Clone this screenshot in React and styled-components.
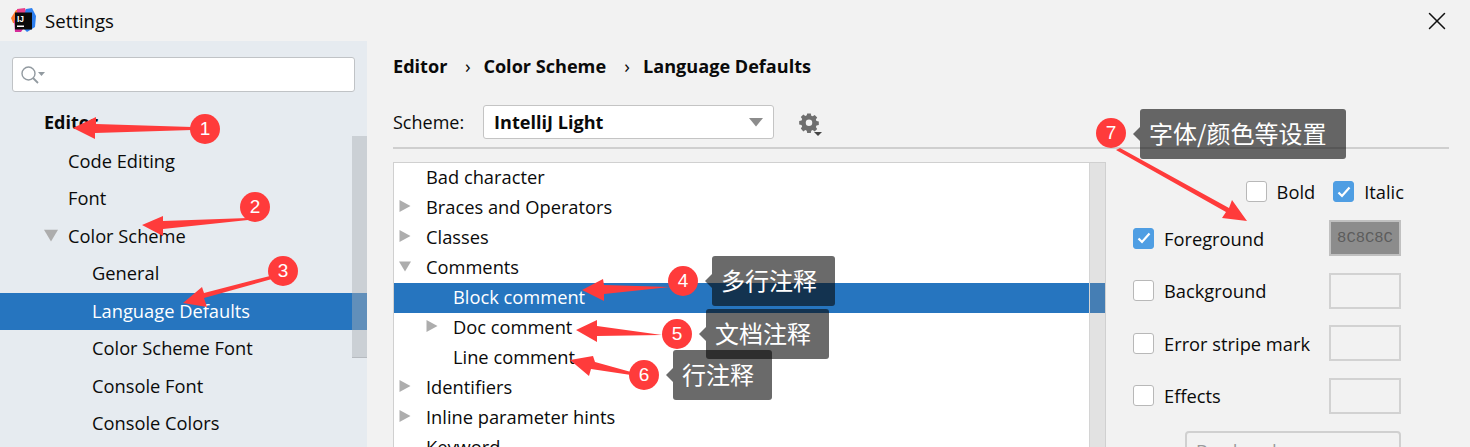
import React from "react";
import styled, { createGlobalStyle } from "styled-components";
import { X } from "lucide-react";

const GlobalStyle = createGlobalStyle`
  html, body {
    margin: 0;
    padding: 0;
    background: #f2f2f2;
  }
  body {
    font-family: "Open Sans", "Noto Sans", "Noto Sans CJK SC", sans-serif;
    font-size: 18.3px;
    color: #0a0a0a;
  }
`;

const Page = styled.div`
  position: relative;
  width: 1470px;
  height: 447px;
  overflow: hidden;
  background: #f2f2f2;
`;

const TitleBar = styled.div`
  height: 41px;
  display: flex;
  align-items: center;
  padding: 0 18px 0 11px;
  gap: 9px;
`;

const Title = styled.span`
  flex: 1;
  font-size: 18.6px;
`;

const Body = styled.div`
  display: flex;
  height: 406px;
`;

const Sidebar = styled.aside`
  position: relative;
  width: 367px;
  flex: none;
  background: #e6ebf0;
  padding: 16px 0 0;
  box-sizing: border-box;
  overflow: hidden;
`;

const Search = styled.div`
  margin: 0 12px;
  width: 343px;
  height: 35px;
  box-sizing: border-box;
  background: #fff;
  border: 1px solid #c0c3c6;
  border-radius: 3px;
  display: flex;
  align-items: center;
  padding-left: 7px;
`;

const NavList = styled.div`
  margin-top: 11px;
`;

const NavRow = styled.div`
  height: ${(p) => (p.$bold ? 39.5 : 37.5)}px;
  box-sizing: border-box;
  display: flex;
  align-items: center;
  padding-left: ${(p) => p.$indent}px;
  padding-bottom: 2px;
  font-weight: ${(p) => (p.$bold ? 700 : 400)};
  font-size: ${(p) => (p.$bold ? 18 : 18.3)}px;
  background: ${(p) => (p.$selected ? "#2675bf" : "transparent")};
  color: ${(p) => (p.$selected ? "#fff" : "inherit")};
`;

const Scroll = styled.div`
  position: absolute;
  right: 0;
  top: 95px;
  width: 15px;
  height: 222px;
  box-sizing: border-box;
  background: rgba(170, 175, 180, 0.45);
  border-bottom: 1px solid #b6babf;
`;

const Main = styled.main`
  flex: 1;
  padding: 0 21px 0 26px;
  min-width: 0;
`;

const Crumbs = styled.div`
  height: 51px;
  display: flex;
  align-items: center;
  font-size: 18.1px;
  font-weight: 700;
  box-sizing: border-box;
  padding-bottom: 2px;
`;

const Sep = styled.span`
  width: ${(p) => p.$w}px;
  box-sizing: border-box;
  padding-left: 5px;
  text-align: center;
  font-weight: 400;
  font-size: 19px;
`;

const SchemeRow = styled.div`
  margin-top: 13px;
  height: 42px;
  display: flex;
  align-items: flex-start;
  border-bottom: 2px solid #cfcfcf;
`;

const SchemeLabel = styled.span`
  width: 90px;
  height: 34px;
  line-height: 34px;
  font-size: 18px;
`;

const Combo = styled.div`
  width: 291px;
  height: 34px;
  box-sizing: border-box;
  background: #fff;
  border: 1px solid #c4c4c4;
  border-radius: 3px;
  display: flex;
  align-items: center;
  justify-content: space-between;
  padding: 0 10px;
  font-size: 18.1px;
  font-weight: 700;
`;

const GearWrap = styled.div`
  margin: 7px 0 0 24px;
  width: 24px;
  height: 24px;
`;

const Content = styled.div`
  display: flex;
  margin-top: 13px;
`;

const TreePanel = styled.div`
  position: relative;
  width: 713px;
  height: 285px;
  flex: none;
  box-sizing: border-box;
  background: #fff;
  border: 1px solid #d0d0d0;
  border-bottom: none;
  overflow: hidden;
`;

const TreeScroll = styled.div`
  position: absolute;
  right: 0;
  top: 0;
  bottom: 0;
  width: 16px;
  background: rgba(150, 150, 150, 0.28);
  border-left: 1px solid #d4d4d4;
  box-sizing: border-box;
`;

const TreeRow = styled.div`
  height: 30px;
  box-sizing: border-box;
  display: flex;
  align-items: center;
  background: ${(p) => (p.$selected ? "#2675bf" : "transparent")};
  color: ${(p) => (p.$selected ? "#fff" : "inherit")};
  padding-left: ${(p) => p.$indent}px;
  padding-bottom: 4px;
`;

const TriSlot = styled.span`
  width: ${(p) => p.$w}px;
  display: flex;
  align-items: center;
  flex: none;
`;

const Attrs = styled.div`
  flex: 1;
  padding-left: 27px;
`;

const StyleRow = styled.div`
  display: flex;
  justify-content: flex-end;
  gap: 18px;
  padding: 11px 45px 2px 0;
  height: 37px;
  align-items: center;
`;

const CheckLabel = styled.label`
  display: flex;
  align-items: center;
  gap: 10px;
`;

const Box = styled.span`
  width: 21px;
  height: 21px;
  box-sizing: border-box;
  border-radius: 3px;
  display: flex;
  align-items: center;
  justify-content: center;
  background: ${(p) => (p.$on ? "#4f9ee3" : "#fff")};
  border: 1px solid ${(p) => (p.$on ? "#4f9ee3" : "#b8b8b8")};
`;

const ColorRow = styled.div`
  height: 52.5px;
  display: flex;
  align-items: center;
  justify-content: space-between;
  width: 268px;
`;

const Swatch = styled.div`
  width: 72px;
  height: 36px;
  box-sizing: border-box;
  border: 2px solid ${(p) => (p.$filled ? "#c0c0c0" : "#d2d2d2")};
  background: ${(p) => (p.$filled ? "#8c8c8c" : "transparent")};
  color: #5c5c5c;
  font-family: "Liberation Mono", monospace;
  font-size: 15.5px;
  display: flex;
  align-items: center;
  justify-content: center;
`;

const EffectSelect = styled.div`
  margin: 9px 0 0 52px;
  width: 216px;
  height: 34px;
  box-sizing: border-box;
  border: 2px solid #d0d0d0;
  border-radius: 4px;
  padding: 3px 9px 0;
  color: #9a9a9a;
  display: flex;
  justify-content: space-between;
  line-height: 30px;
`;

const EffectCaret = styled.span`
  margin-top: 9px;
`;

const Tip = styled.div`
  position: absolute;
  left: ${(p) => p.$x}px;
  top: ${(p) => p.$y}px;
  height: 50px;
  box-sizing: border-box;
  padding: 0 ${(p) => p.$right}px 4px 9px;
  display: flex;
  align-items: center;
  border-radius: 3px;
  background: rgba(6, 6, 6, 0.6);
  color: #fff;
  font-family: "Noto Sans CJK SC", sans-serif;
  font-size: 24px;
  white-space: nowrap;
  &::before {
    content: "";
    position: absolute;
    left: -7px;
    top: 18px;
    border-style: solid;
    border-width: 7px 7px 7px 0;
    border-color: transparent rgba(6, 6, 6, 0.6) transparent transparent;
  }
`;

const Badge = styled.div`
  position: absolute;
  left: ${(p) => p.$x - 15}px;
  top: ${(p) => p.$y - 15}px;
  width: 30px;
  height: 30px;
  border-radius: 50%;
  background: #ff3b3b;
  color: #fff;
  font-family: "Liberation Sans", sans-serif;
  font-size: 19px;
  display: flex;
  align-items: center;
  justify-content: center;
`;

const ArrowLayer = styled.svg`
  position: absolute;
  inset: 0;
  pointer-events: none;
`;

const Tri = ({ down, size = 12, color = "#adadad" }) => (
  <svg width={size} height={size} viewBox="0 0 12 12">
    <path d={down ? "M0 1.5h12L6 11.5z" : "M0.5 0l11 6-11 6z"} fill={color} />
  </svg>
);

const Caret = ({ color = "#8c8c8c" }) => (
  <svg width="14" height="9" viewBox="0 0 14 9">
    <path d="M0 0h14L7 8.5z" fill={color} />
  </svg>
);

const Check = () => (
  <svg width="14" height="12" viewBox="0 0 14 12">
    <path d="M1.5 6.5l3.5 3.5 7.5-8.5" fill="none" stroke="#fff" strokeWidth="2.2" />
  </svg>
);

const Logo = () => (
  <svg width="25" height="25" viewBox="0 0 25 25">
    <path d="M0 10L5 2l8 1-4 13-7-1z" fill="#fe7a2c" />
    <path d="M6 1l8-1 2 6H6z" fill="#e8408a" />
    <path d="M4 24L3 12l11 6-4 6z" fill="#d62c9a" />
    <path d="M15 1l6-1 4 8-1 11-8 5-6-6z" fill="#2d7ff0" />
    <rect x="4" y="4.5" width="17" height="17" fill="#0a0a0a" />
    <text x="6" y="13.5" fill="#fff" fontFamily="Liberation Sans" fontWeight="700" fontSize="8.5">IJ</text>
    <rect x="6" y="17.5" width="7" height="1.5" fill="#fff" />
  </svg>
);

const SearchIcon = () => (
  <svg width="26" height="20" viewBox="0 0 26 20">
    <circle cx="8.5" cy="8.5" r="6.5" fill="none" stroke="#929aa0" strokeWidth="1.4" />
    <path d="M13 13l5 5" stroke="#929aa0" strokeWidth="1.8" />
    <path d="M18 7h7l-3.5 4z" fill="#929aa0" />
  </svg>
);

const Gear = () => (
  <svg width="24" height="24" viewBox="0 0 24 24">
    <path
      fill="#6e6e6e"
      fillRule="evenodd"
      d="M8 1h4l.5 2.6 1.6.7 2.2-1.5 2.8 2.8-1.5 2.2.7 1.6 2.6.5v4l-2.6.5-.7 1.6 1.5 2.2-2.8 2.8-2.2-1.5-1.6.7-.5 2.6H8l-.5-2.6-1.6-.7-2.2 1.5L.9 17.7l1.5-2.2-.7-1.6L-.9 13.4v-4l2.6-.5.7-1.6L.9 5.1l2.8-2.8 2.2 1.5 1.6-.7zM10 7.8a3.6 3.6 0 1 0 0 7.2 3.6 3.6 0 0 0 0-7.2z"
      transform="translate(2 .5) scale(.9)"
    />
    <path d="M16 20h8l-4 4z" fill="#444" />
  </svg>
);

const navItems = [
  { label: "Editor", indent: 44, bold: true },
  { label: "Code Editing", indent: 68 },
  { label: "Font", indent: 68 },
  { label: "Color Scheme", indent: 44, open: true },
  { label: "General", indent: 92 },
  { label: "Language Defaults", indent: 92, selected: true },
  { label: "Color Scheme Font", indent: 92 },
  { label: "Console Font", indent: 92 },
  { label: "Console Colors", indent: 92 },
];

const treeItems = [
  { label: "Bad character" },
  { label: "Braces and Operators", arrow: "right" },
  { label: "Classes", arrow: "right" },
  { label: "Comments", arrow: "down" },
  { label: "Block comment", child: true, selected: true },
  { label: "Doc comment", child: true, arrow: "right" },
  { label: "Line comment", child: true },
  { label: "Identifiers", arrow: "right" },
  { label: "Inline parameter hints", arrow: "right" },
  { label: "Keyword" },
];

const colorRows = [
  { label: "Foreground", on: true, filled: true },
  { label: "Background" },
  { label: "Error stripe mark" },
  { label: "Effects" },
];

const arrows = [
  "M192 127L96 124L96 117L73 128L95 139L95 133L192 130Z",
  "M248 218L163 221L163 216L142 225L163 236L163 229L248 220Z",
  "M270 276L204 293L202 287L183 303L207 307L204 298L272 279Z",
  "M670 287L604 285L603 279L582 290L604 301L604 294Z",
  "M662 335L597 326L597 320L576 330L597 342L597 336Z",
  "M631 372L595 362L593 356L570 360L589 376L591 369L631 375Z",
  "M1120 148L1229 208L1232 200L1247 221L1222 218L1226 212L1116 150Z",
];

const tips = [
  { x: 712, y: 256, right: 18, text: "多行注释" },
  { x: 706, y: 309, right: 18, text: "文档注释" },
  { x: 673, y: 350, right: 18, text: "行注释" },
  { x: 1140, y: 109, right: 20, text: "字体/颜色等设置" },
];

const badges = [
  { x: 205, y: 129, n: 1 },
  { x: 255, y: 207, n: 2 },
  { x: 283, y: 271, n: 3 },
  { x: 683, y: 281, n: 4 },
  { x: 677, y: 334, n: 5 },
  { x: 644, y: 375, n: 6 },
  { x: 1111, y: 133, n: 7 },
];

export default function App() {
  return (
    <Page>
      <GlobalStyle />
      <TitleBar>
        <Logo />
        <Title>Settings</Title>
        <X size={30} strokeWidth={1.2} color="#111" />
      </TitleBar>
      <Body>
        <Sidebar>
          <Search>
            <SearchIcon />
          </Search>
          <NavList>
            {navItems.map((item) => (
              <NavRow
                key={item.label}
                $indent={item.indent}
                $bold={item.bold}
                $selected={item.selected}
              >
                {item.open && (
                  <TriSlot $w={24}>
                    <Tri down size={14} />
                  </TriSlot>
                )}
                {item.label}
              </NavRow>
            ))}
          </NavList>
          <Scroll />
        </Sidebar>
        <Main>
          <Crumbs>
            Editor
            <Sep $w={36}>›</Sep>
            Color Scheme
            <Sep $w={37}>›</Sep>
            Language Defaults
          </Crumbs>
          <SchemeRow>
            <SchemeLabel>Scheme:</SchemeLabel>
            <Combo>
              IntelliJ Light
              <Caret />
            </Combo>
            <GearWrap>
              <Gear />
            </GearWrap>
          </SchemeRow>
          <Content>
            <TreePanel>
              {treeItems.map((item) => (
                <TreeRow
                  key={item.label}
                  $indent={item.child ? 32 : 5}
                  $selected={item.selected}
                >
                  <TriSlot $w={27}>
                    {item.arrow && <Tri down={item.arrow === "down"} />}
                  </TriSlot>
                  {item.label}
                </TreeRow>
              ))}
              <TreeScroll />
            </TreePanel>
            <Attrs>
              <StyleRow>
                <CheckLabel>
                  <Box />
                  Bold
                </CheckLabel>
                <CheckLabel>
                  <Box $on>
                    <Check />
                  </Box>
                  Italic
                </CheckLabel>
              </StyleRow>
              {colorRows.map((row) => (
                <ColorRow key={row.label}>
                  <CheckLabel>
                    <Box $on={row.on}>{row.on && <Check />}</Box>
                    {row.label}
                  </CheckLabel>
                  <Swatch $filled={row.filled}>{row.filled && "8C8C8C"}</Swatch>
                </ColorRow>
              ))}
              <EffectSelect>
                Bordered
                <EffectCaret>
                  <Caret color="#b5b5b5" />
                </EffectCaret>
              </EffectSelect>
            </Attrs>
          </Content>
        </Main>
      </Body>
      <ArrowLayer width="1470" height="447">
        {arrows.map((d) => (
          <path key={d} d={d} fill="#ff3b3b" />
        ))}
      </ArrowLayer>
      {tips.map((t) => (
        <Tip key={t.text} $x={t.x} $y={t.y} $right={t.right}>
          {t.text}
        </Tip>
      ))}
      {badges.map((b) => (
        <Badge key={b.n} $x={b.x} $y={b.y}>
          {b.n}
        </Badge>
      ))}
    </Page>
  );
}
